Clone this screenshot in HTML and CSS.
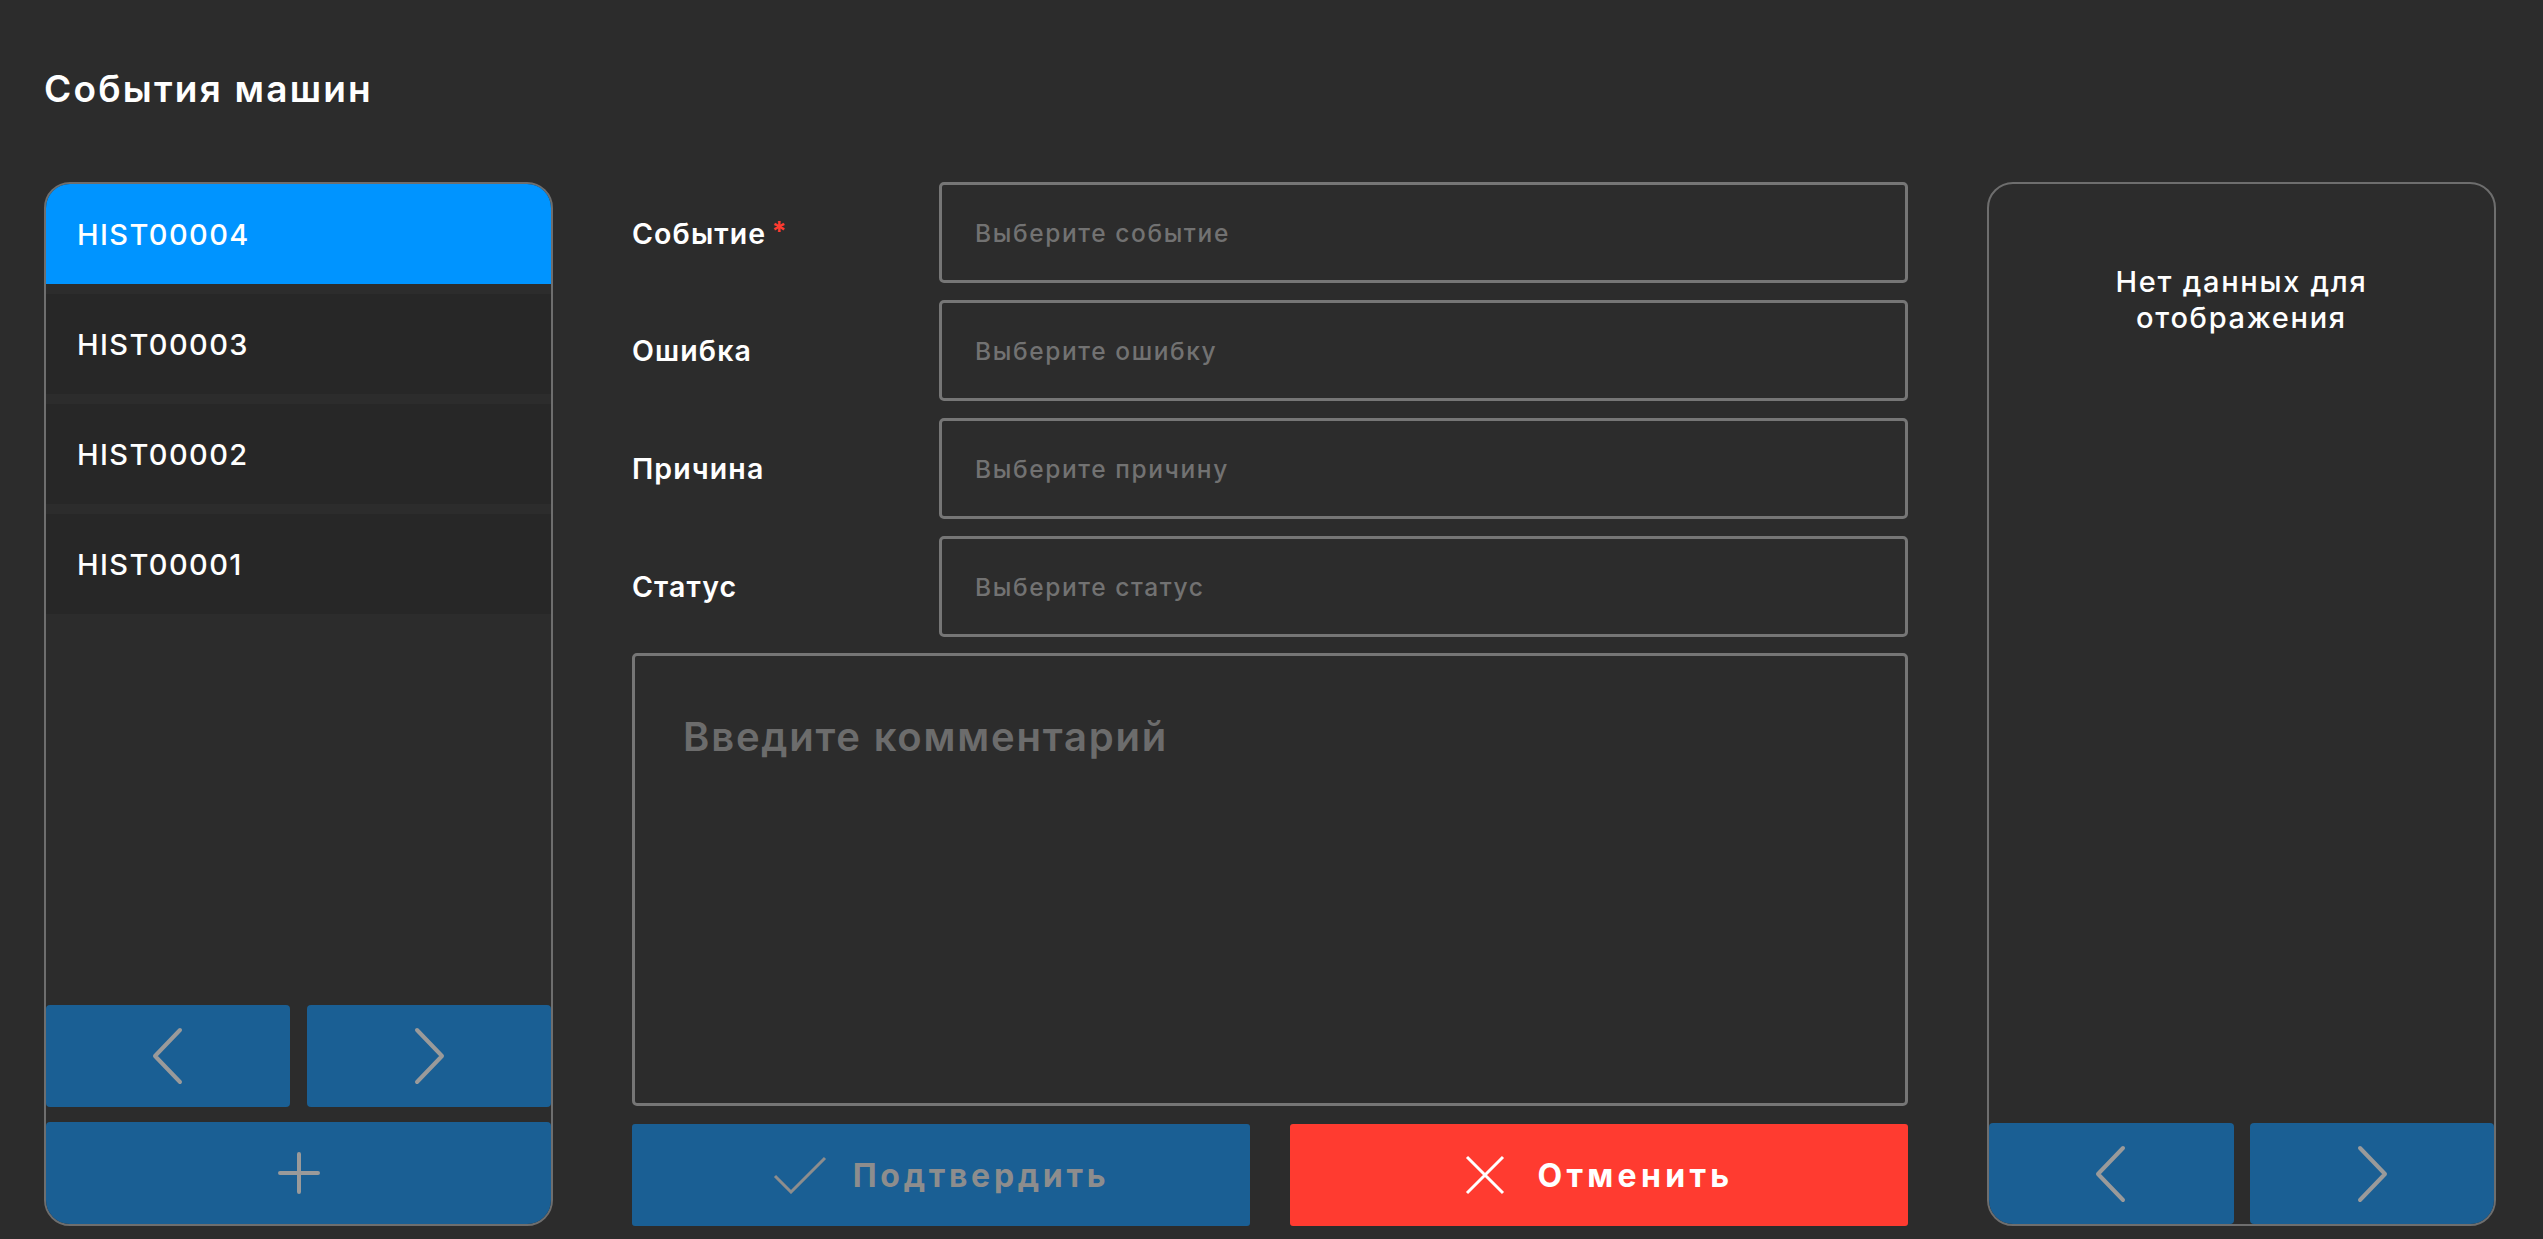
FILE: index.html
```html
<!DOCTYPE html>
<html lang="ru">
<head>
    <meta charset="UTF-8">
    <title>События машин</title>
    <link rel="stylesheet" href="styles.css">
</head>
<body>
    <div class="page">
        <h1 class="title">События машин</h1>
        <div class="layout">
            <aside class="panel">
                <ul class="history-list">
                    <li class="history-item active">HIST00004</li>
                    <li class="history-item">HIST00003</li>
                    <li class="history-item">HIST00002</li>
                    <li class="history-item">HIST00001</li>
                </ul>
                <div class="pager">
                    <button class="nav-btn">
                        <svg width="32" height="58" viewBox="0 0 32 58"><polyline points="28,3 3,29 28,55" /></svg>
                    </button>
                    <button class="nav-btn">
                        <svg width="32" height="58" viewBox="0 0 32 58"><polyline points="4,3 29,29 4,55" /></svg>
                    </button>
                </div>
                <button class="add-btn">
                    <svg width="42" height="42" viewBox="0 0 42 42"><path d="M21 2 V40 M2 21 H40" /></svg>
                </button>
            </aside>

            <main class="form">
                <div class="field">
                    <label class="field-label">Событие <span class="req">*</span></label>
                    <div class="select">Выберите событие</div>
                </div>
                <div class="field">
                    <label class="field-label">Ошибка</label>
                    <div class="select">Выберите ошибку</div>
                </div>
                <div class="field">
                    <label class="field-label">Причина</label>
                    <div class="select">Выберите причину</div>
                </div>
                <div class="field">
                    <label class="field-label">Статус</label>
                    <div class="select">Выберите статус</div>
                </div>
                <textarea class="comment" placeholder="Введите комментарий"></textarea>
                <div class="actions">
                    <button class="btn confirm">
                        <svg width="54" height="38" viewBox="0 0 54 38"><polyline points="2,20 18,36 52,2" /></svg>
                        Подтвердить
                    </button>
                    <button class="btn cancel">
                        <svg width="40" height="40" viewBox="0 0 40 40"><path d="M2 2 L38 38 M38 2 L2 38" /></svg>
                        Отменить
                    </button>
                </div>
            </main>

            <aside class="panel">
                <div class="empty">Нет данных для отображения</div>
                <div class="pager bottom">
                    <button class="nav-btn">
                        <svg width="32" height="58" viewBox="0 0 32 58"><polyline points="28,3 3,29 28,55" /></svg>
                    </button>
                    <button class="nav-btn">
                        <svg width="32" height="58" viewBox="0 0 32 58"><polyline points="4,3 29,29 4,55" /></svg>
                    </button>
                </div>
            </aside>
        </div>
    </div>
</body>
</html>
```

FILE: styles.css
```css
* {
    box-sizing: border-box;
}

body {
    margin: 0;
    background-color: #2c2c2c;
    color: #ffffff;
    font-family: Inter, "Noto Sans", sans-serif;
}

.page {
    height: 1239px;
    padding: 66px 47px 0 44px;
}

.title {
    margin: 0 0 71px 0;
    font-size: 37px;
    line-height: 45px;
    font-weight: 600;
    letter-spacing: 2.2px;
}

.layout {
    display: grid;
    grid-template-columns: 509px 1fr 509px;
    column-gap: 79px;
    height: 1041px;
}

.panel {
    display: flex;
    flex-direction: column;
    border: 2px solid #6e6e6e;
    border-radius: 26px;
    overflow: hidden;
}

.history-list {
    list-style: none;
    margin: 0;
    padding: 0;
    display: flex;
    flex-direction: column;
    gap: 10px;
    flex: 1;
}

.history-item {
    height: 100px;
    display: flex;
    align-items: center;
    padding-left: 31px;
    background: #272727;
    font-size: 29px;
    font-weight: 500;
    letter-spacing: 1.4px;
}

.history-item.active {
    background: #0094ff;
}

.pager {
    display: grid;
    grid-template-columns: 1fr 1fr;
    column-gap: 17px;
    height: 102px;
}

.pager.bottom {
    column-gap: 16px;
    height: 101px;
}

.nav-btn,
.add-btn {
    display: flex;
    align-items: center;
    justify-content: center;
    border: 0;
    padding: 0;
    border-radius: 4px;
    background: #1a5f94;
}

.nav-btn svg,
.add-btn svg {
    fill: none;
    stroke: #9a9a9a;
    stroke-width: 4;
    stroke-linecap: round;
    stroke-linejoin: round;
}

.add-btn {
    margin-top: 15px;
    height: 102px;
}

.form {
    display: flex;
    flex-direction: column;
}

.field {
    display: flex;
    align-items: center;
    margin-bottom: 17px;
}

.field-label {
    width: 307px;
    font-size: 28.5px;
    font-weight: 600;
    letter-spacing: 1.1px;
}

.req {
    margin-left: -3px;
    color: #ff3b30;
    font-size: 27px;
    font-weight: 700;
    vertical-align: 3px;
}

.select {
    flex: 1;
    height: 101px;
    display: flex;
    align-items: center;
    padding-left: 33px;
    border: 3px solid #767676;
    border-radius: 5px;
    color: #727272;
    font-size: 24.5px;
    font-weight: 500;
    letter-spacing: 1.6px;
}

.comment {
    height: 453px;
    margin: -1px 0 18px 0;
    padding: 57px 48px 0 48px;
    border: 3px solid #767676;
    border-radius: 5px;
    background: transparent;
    color: #ffffff;
    font-family: inherit;
    font-size: 40px;
    line-height: 48px;
    font-weight: 600;
    letter-spacing: 1.8px;
    outline: none;
    resize: none;
}

.comment::placeholder {
    color: #6c6c6c;
}

.actions {
    display: grid;
    grid-template-columns: 1fr 1fr;
    column-gap: 40px;
    height: 102px;
}

.btn {
    display: flex;
    align-items: center;
    justify-content: center;
    border: 0;
    border-radius: 3px;
    font-family: inherit;
    font-size: 32px;
    font-weight: 700;
    letter-spacing: 3.7px;
}

.btn svg {
    fill: none;
    stroke-width: 3;
}

.confirm {
    gap: 26px;
    background: #1a5f94;
    color: #8d8d8d;
}

.confirm svg {
    stroke: #8d8d8d;
}

.cancel {
    gap: 33px;
    background: #ff3b30;
    color: #ffffff;
    letter-spacing: 4.3px;
}

.cancel svg {
    stroke: #ffffff;
}

.empty {
    flex: 1;
    padding: 80px 90px 0 90px;
    text-align: center;
    font-size: 29px;
    line-height: 36px;
    font-weight: 500;
    letter-spacing: 1.7px;
}
```
